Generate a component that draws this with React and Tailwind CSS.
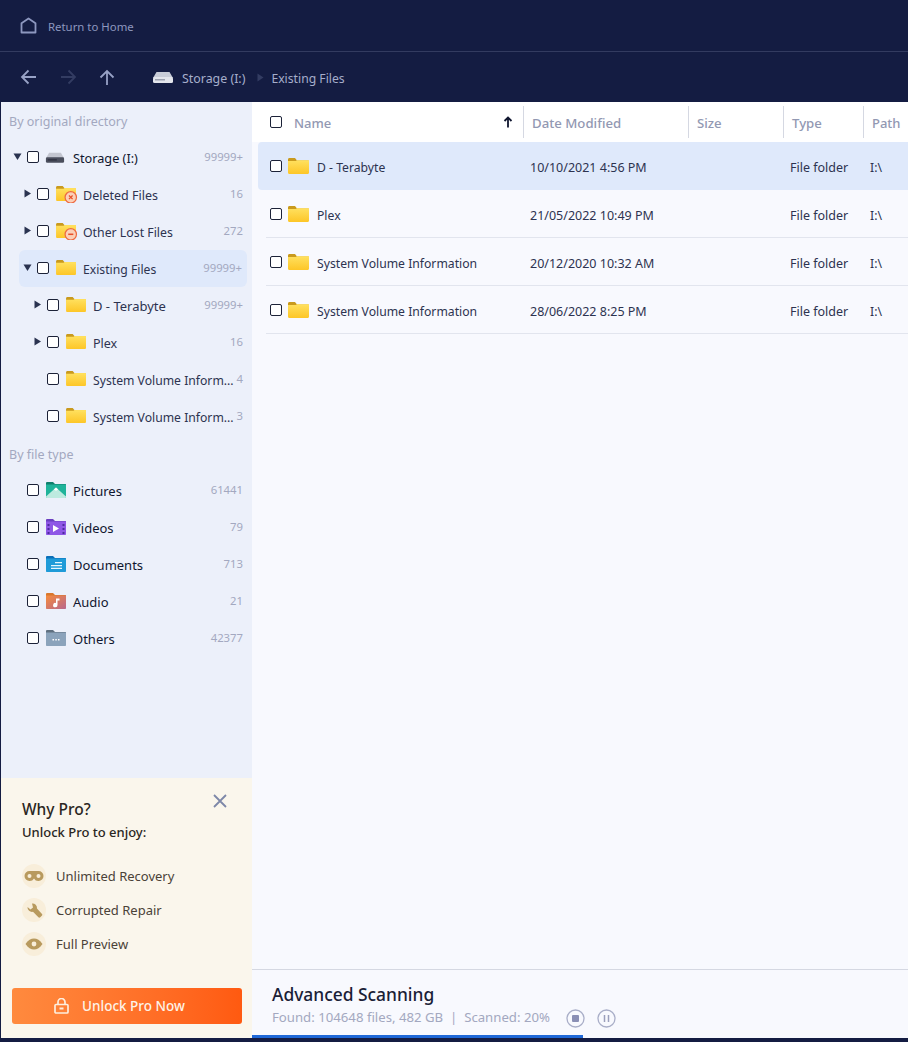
const F = '[font-family:"Noto_Sans","Open_Sans",sans-serif]';

function Folder({ id = "a", badge, small }) {
  return (
    <svg width={small ? 23 : 24} height={small ? 19 : 20} viewBox="0 0 24 20" className={`shrink-0 ${small ? "-mt-[2px]" : ""}`}>
      <defs>
        <linearGradient id={id} x1="0" y1="0" x2="0" y2="1">
          <stop offset="0" stopColor="#ffdf5c" />
          <stop offset="1" stopColor="#fdc627" />
        </linearGradient>
      </defs>
      <path d="M1 3.500C1 2.700 1.600 2 2.400 2H8l2 2.500H21c.6 0 1 .4 1 1V8H1Z" fill="#c99a1e" />
      <path d="M1 5h21v11.500c0 .8-.6 1.500-1.400 1.500H2.400C1.600 18 1 17.300 1 16.500Z" fill={`url(#${id})`} />
      <path d="M9 4.200h13V6H10.500Z" fill="#ffdf5c" />
      {badge === "x" && (
        <g>
          <circle cx="16.500" cy="14" r="6" fill="#fbd0b8" stroke="#ee6a40" strokeWidth="1.300" />
          <path d="M14.600 12.100l3.800 3.800m0-3.800l-3.800 3.800" stroke="#e8502a" strokeWidth="1.300" />
        </g>
      )}
      {badge === "minus" && (
        <g>
          <circle cx="16.500" cy="14" r="6" fill="#fbd0b8" stroke="#ee6a40" strokeWidth="1.300" />
          <path d="M13.800 14h5.400" stroke="#e8502a" strokeWidth="1.600" />
        </g>
      )}
    </svg>
  );
}

function TypeIcon({ kind }) {
  const c = {
    pictures: ["#0f7f6c", "#1fb39a", "#1fb39a"],
    videos: ["#6b3fc0", "#8f58e6", "#8f58e6"],
    documents: ["#0a6fb8", "#1f9bd8", "#1f9bd8"],
    audio: ["#d9772c", "#f58b3c", "#b8678e"],
    others: ["#5f7080", "#8ba3bb", "#8ba3bb"],
  }[kind];
  const id = `ty-${kind}`;
  return (
    <svg width="22" height="18" viewBox="0 0 22 18" className="shrink-0 -mt-[2px]">
      <defs>
        <linearGradient id={id} x1="0" y1="0" x2="1" y2="1">
          <stop offset="0" stopColor={c[1]} />
          <stop offset="1" stopColor={c[2]} />
        </linearGradient>
      </defs>
      <path d="M1 2.200C1 1.500 1.500 1 2.200 1H8l2 2h10.500c.300 0 .500.200.500.500V6H1Z" fill={c[0]} />
      <path d="M1 3.500h20V16c0 .6-.5 1-1 1H2c-.6 0-1-.4-1-1Z" fill={`url(#${id})`} />
      {kind === "pictures" && (
        <g>
          <path d="M1 15.500 11 6.500l10 9V16c0 .6-.5 1-1 1H2c-.6 0-1-.4-1-1Z" fill="#bdeadf" />
          <path d="M8.800 8.500 11 6.500l2.200 2-2.200 1.200Z" fill="#fff" />
        </g>
      )}
      {kind === "videos" && (
        <g>
          <path d="M8 7l6 3.500L8 14Z" fill="#fff" />
          <path d="M2.500 6h2v2h-2zM2.500 10h2v2h-2zM2.500 14h2v2h-2zM17.500 6h2v2h-2zM17.500 10h2v2h-2zM17.500 14h2v2h-2z" fill="#4f2aa0" />
        </g>
      )}
      {kind === "documents" && <path d="M10 7h7v1.200h-7zM6 10h11v1.200H6zM6 12.800h11V14H6z" fill="#e6f6fd" />}
      {kind === "audio" && <path d="M11 6.500h3.500v2H12.500V13a2.200 2.200 0 1 1-1.500-2Z" fill="#fff" />}
      {kind === "others" && <path d="M7.500 10h1.500v1.500H7.500zM10.300 10h1.500v1.500h-1.500zM13 10h1.500v1.500H13z" fill="#fff" />}
    </svg>
  );
}

function Drive({ light, w = 22 }) {
  return (
    <svg width={w} height={w * 14 / 22} viewBox="0 0 22 14" className="shrink-0">
      <path d="M4.500 2h13L21 8H1Z" fill={light ? "#c8ccd8" : "#c3c6d0"} />
      <rect x="1" y="7" width="20" height="6" rx="1.500" fill={light ? "#e3e5ec" : "#4a4e5c"} />
      <rect x="3" y="9" width="10" height="1.500" fill={light ? "#9ba0ae" : "#2f3240"} />
    </svg>
  );
}

function Box() {
  return <span className="block w-[12px] h-[12px] shrink-0 rounded-[2px] border border-[#1c2238] bg-white" />;
}

function Caret({ open, hidden }) {
  return (
    <span className="w-[10px] h-[10px] shrink-0 flex items-center justify-center -mt-[2px]">
      {!hidden && (
        <svg width="9" height="9" viewBox="0 0 9 9">
          {open ? <path d="M0.500 1.500h8L4.500 8Z" fill="#2a3350" /> : <path d="M1.500 0.500v8L8 4.500Z" fill="#2a3350" />}
        </svg>
      )}
    </span>
  );
}

function TreeRow({ indent, open, noCaret, icon, label, count, active, bold, size = "text-[12.500px]", pad = "pt-[4px]" }) {
  return (
    <div className={`h-[37px] flex items-center ${active ? "ml-[18px] mr-[5px] bg-[#dfe9fb] rounded-[6px]" : ""}`} style={{ paddingLeft: active ? indent - 18 : indent }}>
      <Caret open={open} hidden={noCaret} />
      <span className="w-[5px]" />
      <span className="-mt-[2px]"><Box /></span>
      <span className="w-[6px]" />
      {icon}
      <span className={`ml-[5px] flex-1 min-w-0 whitespace-nowrap overflow-hidden ${pad} ${size} ${bold ? "text-[#10162f]" : "text-[#2d3350]"}`}>{label}</span>
      <span className={`text-[11.300px] text-[#a3a8c0] ${active ? "pr-[5px]" : "pr-[9px]"}`}>{count}</span>
    </div>
  );
}

function TypeRow({ kind, label, count }) {
  return (
    <div className="h-[37px] flex items-center pl-[26px]">
      <span className="-mt-[2px]"><Box /></span>
      <span className="w-[6px]" />
      <TypeIcon kind={kind} />
      <span className="ml-[6px] pt-[2px] flex-1 text-[13px] text-[#10162f]">{label}</span>
      <span className="text-[11.300px] text-[#a3a8c0] pr-[9px]">{count}</span>
    </div>
  );
}

function HeaderCell({ w, label }) {
  return (
    <div className="h-[32px] flex items-center border-r border-[#d5d8e2] pl-[8px] shrink-0" style={{ width: w }}>
      <span className="pt-[4px] text-[13.200px] font-medium text-[#9298b2]">{label}</span>
    </div>
  );
}

function FileRow({ id, name, date, selected }) {
  return (
    <div className={selected ? "h-[48px] ml-[6px] bg-[#dfe9fb] rounded-l-[4px] flex items-center text-[#2d3350]" : "h-[48px] ml-[14px] pt-[1px] border-b border-[#e2e5ee] flex items-center text-[#2d3350]"}>
      <div className={`flex items-center shrink-0 ${selected ? "w-[272px] pl-[12px]" : "w-[264px] pl-[4px]"}`}>
        <Box />
        <span className="w-[5px]" />
        <Folder id={id} />
        <span className="ml-[6px] pt-[5px] text-[12.200px]">{name}</span>
      </div>
      <span className="w-[260px] pt-[5px] shrink-0 text-[12.500px]">{date}</span>
      <span className="w-[80px] pt-[5px] shrink-0 text-[12.500px]">File folder</span>
      <span className="pt-[5px] text-[12.200px]">I:\</span>
    </div>
  );
}

function Perk({ icon, label }) {
  return (
    <div className="h-[34px] flex items-center">
      <span className="w-[24px] h-[24px] rounded-full bg-[#f8eeda] flex items-center justify-center shrink-0">{icon}</span>
      <span className="ml-[10px] pt-[1px] text-[13px] text-[#4a4238]">{label}</span>
    </div>
  );
}

export default function App() {
  return (
    <div className={`w-[908px] h-[1042px] flex flex-col overflow-hidden bg-[#141c42] ${F}`}>
      <div className="h-[52px] shrink-0 flex items-center pl-[20px] border-b border-[#333b60]">
        <svg width="17" height="17" viewBox="0 0 17 17" fill="none" className="-mt-[1px]">
          <path d="M1.500 15.500V6.200L8.500 1.500l7 4.700v9.300Z" stroke="#8d97bf" strokeWidth="1.800" strokeLinejoin="round" />
        </svg>
        <span className="ml-[11px] pt-[2px] text-[11.400px] text-[#8d97bf]">Return to Home</span>
      </div>
      <div className="h-[50px] shrink-0 flex items-center pl-[20px]">
        <svg width="17" height="16" viewBox="0 0 17 16" fill="none" stroke="#98a2c6" strokeWidth="1.800"><path d="M16 8H2M8.500 1.500 2 8l6.500 6.500" /></svg>
        <svg className="ml-[23px]" width="17" height="16" viewBox="0 0 17 16" fill="none" stroke="#333c62" strokeWidth="1.800"><path d="M1 8h14M8.500 1.500 15 8l-6.500 6.500" /></svg>
        <svg className="ml-[22px]" width="16" height="17" viewBox="0 0 16 17" fill="none" stroke="#98a2c6" strokeWidth="1.800"><path d="M8 16V2M1.500 8.500 8 2l6.500 6.500" /></svg>
        <span className="ml-[37px]"><Drive light /></span>
        <span className="ml-[8px] pt-[4px] text-[12.400px] text-[#a6aecb]">Storage (I:)</span>
        <svg className="ml-[12px]" width="7" height="9" viewBox="0 0 7 9"><path d="M0.500 0.500v8L6.500 4.500Z" fill="#333c62" /></svg>
        <span className="ml-[7px] pt-[4px] text-[12.200px] text-[#a6aecb]">Existing Files</span>
      </div>
      <div className="flex-1 min-h-0 flex pb-[4px]">
        <div className="w-[251px] shrink-0 ml-[1px] flex flex-col bg-[#ecf0fa]">
          <div className="flex-1 min-h-0">
            <div className="h-[37px] flex items-center pl-[8px] pt-[4px] text-[12.500px] text-[#a3a8c0]">By original directory</div>
            <TreeRow indent={11} open icon={<span className="mr-[3px] -mt-[1px]"><Drive w={20} /></span>} label="Storage (I:)" count="99999+" bold size="text-[12.700px]" pad="pt-[2px]" />
            <TreeRow indent={21} icon={<Folder small id="f1" badge="x" />} label="Deleted Files" count="16" />
            <TreeRow indent={21} icon={<Folder small id="f2" badge="minus" />} label="Other Lost Files" count="272" size="text-[12.300px]" />
            <TreeRow indent={21} open icon={<Folder small id="f3" />} label="Existing Files" count="99999+" active size="text-[12.200px]" />
            <TreeRow indent={31} icon={<Folder small id="f4" />} label="D - Terabyte" count="99999+" size="text-[13px]" pad="pt-[2px]" />
            <TreeRow indent={31} icon={<Folder small id="f5" />} label="Plex" count="16" />
            <TreeRow indent={31} noCaret icon={<Folder small id="f6" />} label="System Volume Inform..." count="4" size="text-[12.200px]" />
            <TreeRow indent={31} noCaret icon={<Folder small id="f7" />} label="System Volume Inform..." count="3" size="text-[12.200px]" />
            <div className="h-[37px] flex items-center pl-[8px] pt-[4px] text-[12.500px] text-[#a3a8c0]">By file type</div>
            <TypeRow kind="pictures" label="Pictures" count="61441" />
            <TypeRow kind="videos" label="Videos" count="79" />
            <TypeRow kind="documents" label="Documents" count="713" />
            <TypeRow kind="audio" label="Audio" count="21" />
            <TypeRow kind="others" label="Others" count="42377" />
          </div>
          <div className="relative h-[260px] shrink-0 bg-[#faf6ec] px-[11px] pt-[20px]">
            <svg className="absolute top-[16px] right-[25px]" width="14" height="14" viewBox="0 0 14 14" stroke="#7d87a8" strokeWidth="1.800"><path d="M1 1l12 12M13 1 1 13" /></svg>
            <div className="pl-[10px] text-[15.500px] leading-[22px] font-medium text-[#2a2622]">Why Pro?</div>
            <div className="pl-[10px] pt-[1px] text-[13px] leading-[22px] font-medium text-[#2a2622]">Unlock Pro to enjoy:</div>
            <div className="pl-[10px] mt-[16px]">
              <Perk label="Unlimited Recovery" icon={<svg width="20" height="12" viewBox="0 0 20 12"><path d="M5.500 1h9a5 5 0 0 1 0 10 5 5 0 0 1-4.500-2.500A5 5 0 0 1 5.500 11a5 5 0 0 1 0-10Z" fill="#b89a5e" /><circle cx="5.500" cy="6" r="2" fill="#f8eeda" /><circle cx="14.500" cy="6" r="2" fill="#f8eeda" /></svg>} />
              <Perk label="Corrupted Repair" icon={<svg width="17" height="17" viewBox="0 0 17 17"><path d="M6 1.500A4.500 4.500 0 0 1 11 6.500l5 5.500c.5.600.5 1-.2 1.800l-1.500 1.500c-.7.600-1.300.6-1.900 0L7 9.800A4.500 4.500 0 0 1 1.500 5l3 2.500L7 5.500Z" fill="#b89a5e" /></svg>} />
              <Perk label="Full Preview" icon={<svg width="18" height="12" viewBox="0 0 18 12"><path d="M0.500 6C3 2 6 .5 9 .5S15 2 17.500 6C15 10 12 11.500 9 11.500S3 10 0.500 6Z" fill="#b89a5e" /><circle cx="9" cy="6" r="2.400" fill="#f8eeda" /></svg>} />
            </div>
            <button className="absolute left-[11px] right-[10px] top-[210px] h-[36px] pr-[15px] rounded-[3px] bg-gradient-to-r from-[#ff8a3e] to-[#ff5a10] flex items-center justify-center gap-[13px] text-[13.500px] font-medium text-[#fdf3e8]">
              <svg width="15" height="16" viewBox="0 0 15 16" fill="none" stroke="#fdeedd" strokeWidth="1.700"><rect x="1" y="6.500" width="13" height="8.500" rx="1" /><path d="M4 6.500V4a3.500 3.500 0 0 1 7 0v2.500" /><path d="M5.500 10.500h4" strokeWidth="2" /></svg>
              <span>Unlock Pro Now</span>
            </button>
          </div>
        </div>
        <div className="flex-1 min-w-0 flex flex-col bg-[#f8f9fe]">
          <div className="h-[40px] shrink-0 bg-white flex items-center">
            <div className="h-[32px] w-[272px] shrink-0 flex items-center pl-[18px] pr-[10px] border-r border-[#d5d8e2]">
              <Box />
              <span className="ml-[12px] pt-[4px] flex-1 text-[13px] font-medium text-[#9298b2]">Name</span>
              <svg width="10" height="12" viewBox="0 0 10 12" fill="none" stroke="#10162f" strokeWidth="1.800"><path d="M5 11.500V1.500M1.500 5 5 1.500 8.500 5" /></svg>
            </div>
            <HeaderCell w={165} label="Date Modified" />
            <HeaderCell w={95} label="Size" />
            <HeaderCell w={80} label="Type" />
            <div className="pl-[8px] pt-[4px] text-[13px] font-medium text-[#9298b2]">Path</div>
          </div>
          <div className="flex-1 min-h-0">
            <FileRow id="t1" name="D - Terabyte" date="10/10/2021 4:56 PM" selected />
            <FileRow id="t2" name="Plex" date="21/05/2022 10:49 PM" />
            <FileRow id="t3" name="System Volume Information" date="20/12/2020 10:32 AM" />
            <FileRow id="t4" name="System Volume Information" date="28/06/2022 8:25 PM" />
          </div>
          <div className="relative h-[69px] shrink-0 border-t border-[#d5d8e2] pl-[20px] pt-[12px]">
            <div className="text-[17.400px] leading-[24px] font-medium text-[#1a2036]">Advanced Scanning</div>
            <div className="flex items-center mt-[1px] h-[22px]">
              <span className="text-[13.200px] text-[#a3a8c0]">Found: 104648 files, 482 GB &nbsp;|&nbsp; Scanned: 20%</span>
              <svg className="ml-[16px]" width="19" height="19" viewBox="0 0 19 19"><circle cx="9.500" cy="9.500" r="8.500" fill="none" stroke="#a9aec8" strokeWidth="1.300" /><rect x="6" y="6" width="7" height="7" rx="1" fill="#8a8fb5" /></svg>
              <svg className="ml-[12px]" width="19" height="19" viewBox="0 0 19 19"><circle cx="9.500" cy="9.500" r="8.500" fill="none" stroke="#a9aec8" strokeWidth="1.300" /><path d="M7.500 6v7M11.500 6v7" stroke="#9a9fbc" strokeWidth="1.500" /></svg>
            </div>
            <div className="absolute left-0 bottom-0 w-[331px] h-[3px] bg-[#1f68d8]" />
          </div>
        </div>
      </div>
    </div>
  );
}
